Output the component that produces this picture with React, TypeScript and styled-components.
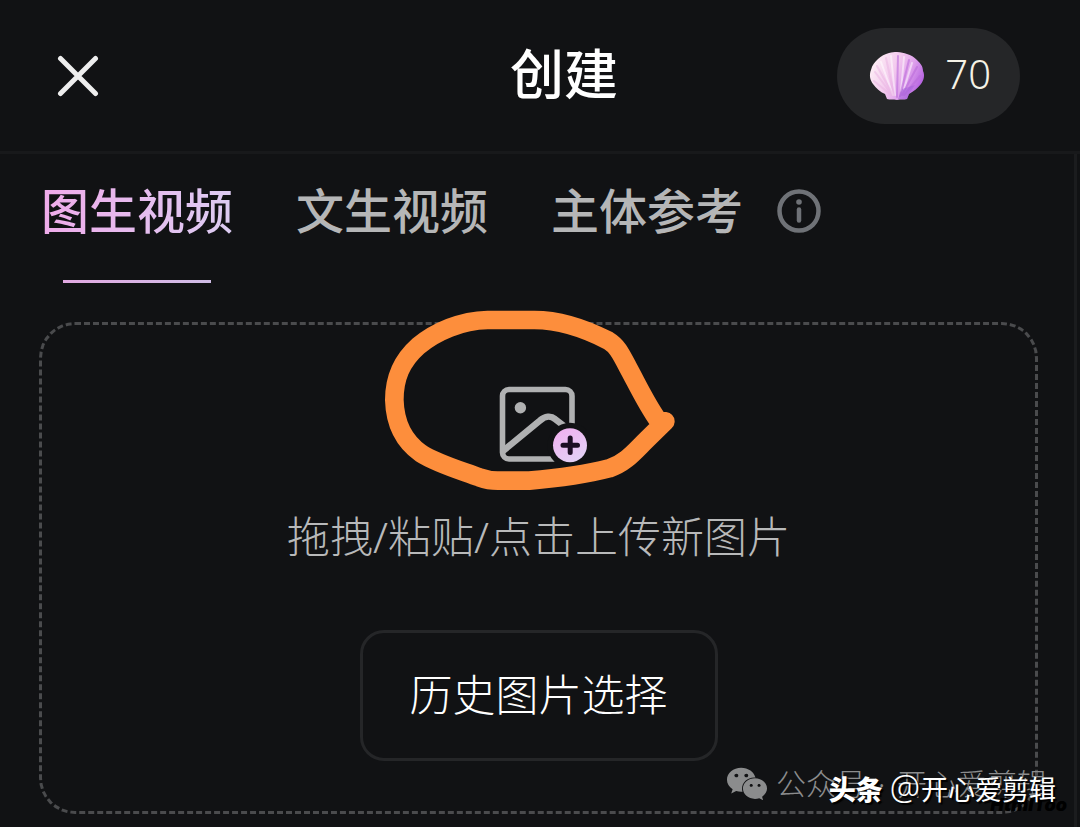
import React, { useState } from "react";
import styled, { createGlobalStyle, css } from "styled-components";
import { FaWeixin } from "react-icons/fa";

const GlobalStyle = createGlobalStyle`
  * { box-sizing: border-box; }
  body {
    margin: 0;
    background: #111214;
    color: #fff;
    font-family: "Noto Sans", "Noto Sans CJK SC", sans-serif;
  }
  button {
    margin: 0;
    padding: 0;
    border: 0;
    background: none;
    color: inherit;
    font: inherit;
    cursor: pointer;
  }
  svg { display: block; }
`;

const Page = styled.div`
  position: relative;
  display: flex;
  flex-direction: column;
  min-height: 100vh;
  overflow: hidden;
`;

const Header = styled.header`
  display: grid;
  grid-template-columns: 60px 1fr;
  align-items: center;
  padding: 28px 60px 27px 48px;
  border-bottom: 3px solid #18191b;
`;

const CloseButton = styled.button`
  display: grid;
  place-items: center;
  height: 60px;
`;

const Title = styled.h1`
  grid-area: 1 / 2;
  margin: 0;
  padding-bottom: 4px;
  text-align: center;
  font-size: 54px;
  line-height: 64px;
  font-weight: 500;
`;

const Balance = styled.button`
  grid-area: 1 / 2;
  justify-self: end;
  display: flex;
  align-items: center;
  gap: 20px;
  height: 96px;
  padding: 0 29px 0 32px;
  border-radius: 48px;
  background: #252628;
  color: #f6f2e6;
  font-size: 40px;
  line-height: 64px;
  font-weight: 300;
`;

const Amount = styled.span`
  padding-bottom: 4px;
`;

const Panel = styled.main`
  flex: 1;
  margin-right: 3px;
  padding: 25px 36px 13px 39px;
  border-right: 3px solid #1b1c1e;
`;

const TabBar = styled.div`
  display: flex;
  align-items: flex-start;
  gap: 63px;
  padding-left: 2px;
`;

const Tab = styled.button<{ $active: boolean }>`
  display: flex;
  flex-direction: column;
  align-items: center;
  gap: 37px;
  color: #b5b6b7;
  font-size: 48px;
  line-height: 64px;
  font-weight: 500;

  &::after {
    content: "";
    width: 148px;
    height: 3px;
    background: ${(p) => (p.$active ? "linear-gradient(90deg, #e2a9e2, #d0bde6)" : "none")};
  }
`;

const TabLabel = styled.span<{ $active: boolean }>`
  ${(p) =>
    p.$active &&
    css`
      background: linear-gradient(100deg, #f0aaea, #dccdf2);
      background-clip: text;
      -webkit-background-clip: text;
      color: transparent;
    `}
`;

const TabWithInfo = styled.div`
  display: flex;
  align-items: flex-start;
  gap: 34px;
`;

const InfoButton = styled.button`
  display: grid;
  place-items: center;
  height: 64px;
`;

const DropZone = styled.section`
  display: flex;
  flex-direction: column;
  align-items: center;
  gap: 61px;
  margin-top: 39px;
  padding: 61px 24px 50px;
  border: 3px dashed #4a4b4d;
  border-radius: 36px;
`;

const UploadButton = styled.button`
  display: flex;
  flex-direction: column;
  align-items: center;
  gap: 39px;
  color: #b8b9ba;
  font-size: 43px;
  line-height: 64px;
  font-weight: 300;
`;

const IconFrame = styled.span`
  position: relative;
`;

const Scribble = styled.svg`
  position: absolute;
  left: -120px;
  top: -86px;
  pointer-events: none;
`;

const HistoryButton = styled.button`
  padding: 29px 47px 31px;
  border: 3px solid #252628;
  border-radius: 24px;
  font-size: 43px;
  line-height: 65px;
  font-weight: 300;
`;

const AccountMark = styled.div`
  position: absolute;
  right: 33px;
  bottom: 21px;
  display: flex;
  align-items: center;
  gap: 8px;
  color: #8b8c8d;
  font-size: 30px;
  line-height: 44px;
  font-weight: 300;
  white-space: pre;
`;

const Dot = styled.span`
  padding: 0 4px;
`;

const AuthorMark = styled.div`
  position: absolute;
  right: 24px;
  bottom: 15px;
  display: flex;
  align-items: baseline;
  gap: 7px;
  font-size: 27px;
  line-height: 44px;
  text-shadow: 2px 2px 1px #000;

  strong { font-weight: 900; }
`;

const AtSign = styled.span`
  padding-right: 1px;
  font-size: 34px;
  font-weight: 300;
`;

const SiteMark = styled.div`
  position: absolute;
  right: 13px;
  bottom: 10px;
  color: #000;
  font: italic 900 18px/24px Inter, sans-serif;
`;

const CloseIcon = () => (
  <svg width="42" height="42" viewBox="0 0 42 42" fill="none" stroke="#eeeeee" strokeWidth="5" strokeLinecap="round" aria-hidden>
    <path d="M3.500 3.500 38.500 38.500M38.500 3.500 3.500 38.500" />
  </svg>
);

const ShellIcon = () => (
  <svg width="56" height="50" viewBox="0 0 56 50" aria-hidden>
    <defs>
      <linearGradient id="shell" x1="0" y1="0.2" x2="1" y2="0.6">
        <stop offset="0" stopColor="#fff3f6" />
        <stop offset="0.45" stopColor="#f3c9ee" />
        <stop offset="0.7" stopColor="#dfa2ec" />
        <stop offset="1" stopColor="#b45fe0" />
      </linearGradient>
    </defs>
    <path
      fill="url(#shell)"
      d="M28 1C32 1 35 2 38 3C42 4 45 6 48 9C51 12 54 15 54 20C56 24 55 29 52 33C49 37 45 40 40 43L38 48C35 49 32 48 28 49C24 48 21 49 18 48L16 43C11 41 7 37 4 33C1 29 0 24 2 19C3 14 6 11 9 8C12 5 16 3 20 2C23 1 25 1 28 1Z"
    />
    <g fill="none" strokeLinecap="round" strokeWidth="2">
      <path stroke="#fff" opacity="0.5" d="M26 44 22 5M24 44 12 11M32 40 35 6M35 38 43 12" />
      <path stroke="#e9b3e2" opacity="0.5" d="M23 44 6 21M22 44 5 30M25 44 17 7M24 44 8 15" />
      <path stroke="#bb6cda" opacity="0.6" d="M28 46 29 5M31 45 40 9M33 44 48 16M35 44 51 25" />
    </g>
    <path fill="#9c5ad8" opacity="0.45" d="M29 48 33 38 46 34 40 43 38 48Z" />
  </svg>
);

const InfoIcon = () => (
  <svg width="44" height="44" viewBox="0 0 44 44" fill="none" stroke="#6f7277" aria-hidden>
    <circle cx="22" cy="22" r="19.500" strokeWidth="4.500" />
    <path d="M22 20.500V31.500" strokeWidth="4.500" strokeLinecap="round" />
    <circle cx="22" cy="13" r="2.800" fill="#6f7277" stroke="none" />
  </svg>
);

const AddImageIcon = () => (
  <svg width="96" height="80" viewBox="0 0 96 80" fill="none" aria-hidden>
    <defs>
      <linearGradient id="badge" x1="0" y1="0" x2="0.6" y2="1">
        <stop offset="0" stopColor="#f2aef0" />
        <stop offset="1" stopColor="#e3d0f5" />
      </linearGradient>
    </defs>
    <rect x="11.500" y="3.500" width="69.500" height="69.500" rx="6.500" stroke="#b0b1b2" strokeWidth="5.600" />
    <circle cx="29.400" cy="21.700" r="5.700" fill="#b0b1b2" />
    <path d="M12 65 49 34.500C54 30 60 29.500 64 33L73 40" stroke="#b0b1b2" strokeWidth="6.500" />
    <circle cx="79" cy="59.300" r="22.500" fill="#111214" />
    <circle cx="79" cy="59.300" r="17" fill="url(#badge)" />
    <path d="M72 59.300H86.500M79.200 52V66.500" stroke="#1c0f24" strokeWidth="5" strokeLinecap="round" />
  </svg>
);

const TABS = ["图生视频", "文生视频", "主体参考"];

export default function App() {
  const [active, setActive] = useState(0);

  const renderTab = (label: string, index: number) => (
    <Tab
      key={label}
      type="button"
      role="tab"
      aria-selected={active === index}
      $active={active === index}
      onClick={() => setActive(index)}
    >
      <TabLabel $active={active === index}>{label}</TabLabel>
    </Tab>
  );

  return (
    <Page>
      <GlobalStyle />
      <Header>
        <CloseButton type="button" aria-label="关闭">
          <CloseIcon />
        </CloseButton>
        <Title>创建</Title>
        <Balance type="button">
          <ShellIcon />
          <Amount>70</Amount>
        </Balance>
      </Header>

      <Panel>
        <TabBar role="tablist">
          {renderTab(TABS[0], 0)}
          {renderTab(TABS[1], 1)}
          <TabWithInfo>
            {renderTab(TABS[2], 2)}
            <InfoButton type="button" aria-label="说明">
              <InfoIcon />
            </InfoButton>
          </TabWithInfo>
        </TabBar>

        <DropZone>
          <UploadButton type="button">
            <IconFrame>
              <AddImageIcon />
              <Scribble width="320" height="200" viewBox="0 0 960 600" fill="none" aria-hidden>
                <path
                  d="M883 364 862 362C825 310 800 255 770 200C748 158 738 138 712 122C650 90 570 60 490 60L350 60C270 62 195 94 142 138C90 184 70 235 70 300C72 370 100 425 150 460C200 492 275 513 325 532C345 539 362 542 380 542L475 542C560 535 650 522 715 505C765 488 790 455 828 418L883 364"
                  stroke="#fd8e3c"
                  strokeWidth="56"
                  strokeLinecap="round"
                  strokeLinejoin="round"
                />
              </Scribble>
            </IconFrame>
            拖拽/粘贴/点击上传新图片
          </UploadButton>
          <HistoryButton type="button">历史图片选择</HistoryButton>
        </DropZone>
      </Panel>

      <AccountMark>
        <FaWeixin size={42} aria-hidden />
        <span>
          公众号<Dot> · </Dot>开心爱剪辑
        </span>
      </AccountMark>
      <SiteMark>HtmlToo</SiteMark>
      <AuthorMark>
        <strong>头条</strong>
        <span>
          <AtSign>@</AtSign>开心爱剪辑
        </span>
      </AuthorMark>
    </Page>
  );
}
